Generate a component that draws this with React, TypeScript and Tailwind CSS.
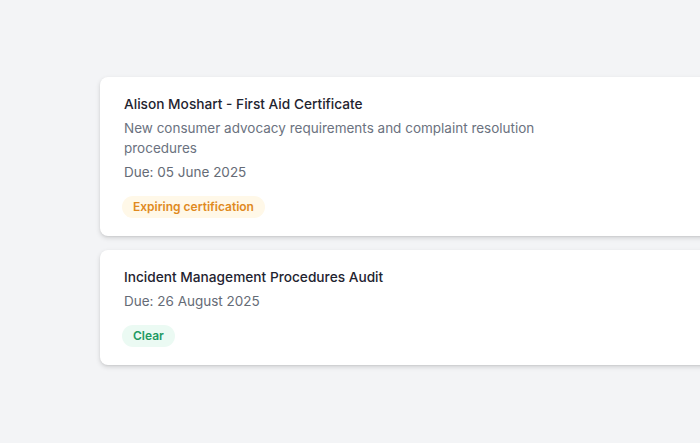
const items = [
	{
		title: "Alison Moshart - First Aid Certificate",
		description:
			"New consumer advocacy requirements and complaint resolution procedures",
		due: "Due: 05 June 2025",
		status: "Expiring certification",
		tone: "amber",
	},
	{
		title: "Incident Management Procedures Audit",
		description: "",
		due: "Due: 26 August 2025",
		status: "Clear",
		tone: "green",
	},
];

export default function App() {
	return (
		<div
			className="w-[700px] h-[443px] overflow-hidden bg-[#f3f4f6] pt-[77px] pl-[100px]"
			style={{ fontFamily: "Inter, 'Noto Sans', sans-serif" }}
		>
			<div className="flex flex-col gap-[14px]">
				{items.map((item) => (
					<div
						key={item.title}
						className="w-[640px] shrink-0 rounded-lg bg-white pt-[17px] pb-[18px] pl-6 pr-6 shadow-[0_2px_5px_rgba(0,0,0,0.14),0_1px_2px_rgba(0,0,0,0.06)]"
					>
						<h3 className="text-[13.7px] leading-5 font-medium text-[#1f2430]">
							{item.title}
						</h3>
						{item.description && (
							<p className="mt-1 w-[430px] text-[13.5px] leading-5 text-[#6b7280]">
								{item.description}
							</p>
						)}
						<p className="mt-1 text-[13.5px] leading-5 text-[#656b76]">{item.due}</p>
						<div className="mt-[14px] -ml-[2px] flex">
							{item.tone === "amber" ? (
								<span className="h-[22px] rounded-full bg-[#fff8e8] px-[11px] text-[12px] leading-[22px] font-semibold text-[#e08a1e]">
									{item.status}
								</span>
							) : (
								<span className="h-[22px] rounded-full bg-[#ebfaf3] px-[11px] text-[12px] leading-[22px] font-semibold text-[#1f9a63]">
									{item.status}
								</span>
							)}
						</div>
					</div>
				))}
			</div>
		</div>
	);
}
